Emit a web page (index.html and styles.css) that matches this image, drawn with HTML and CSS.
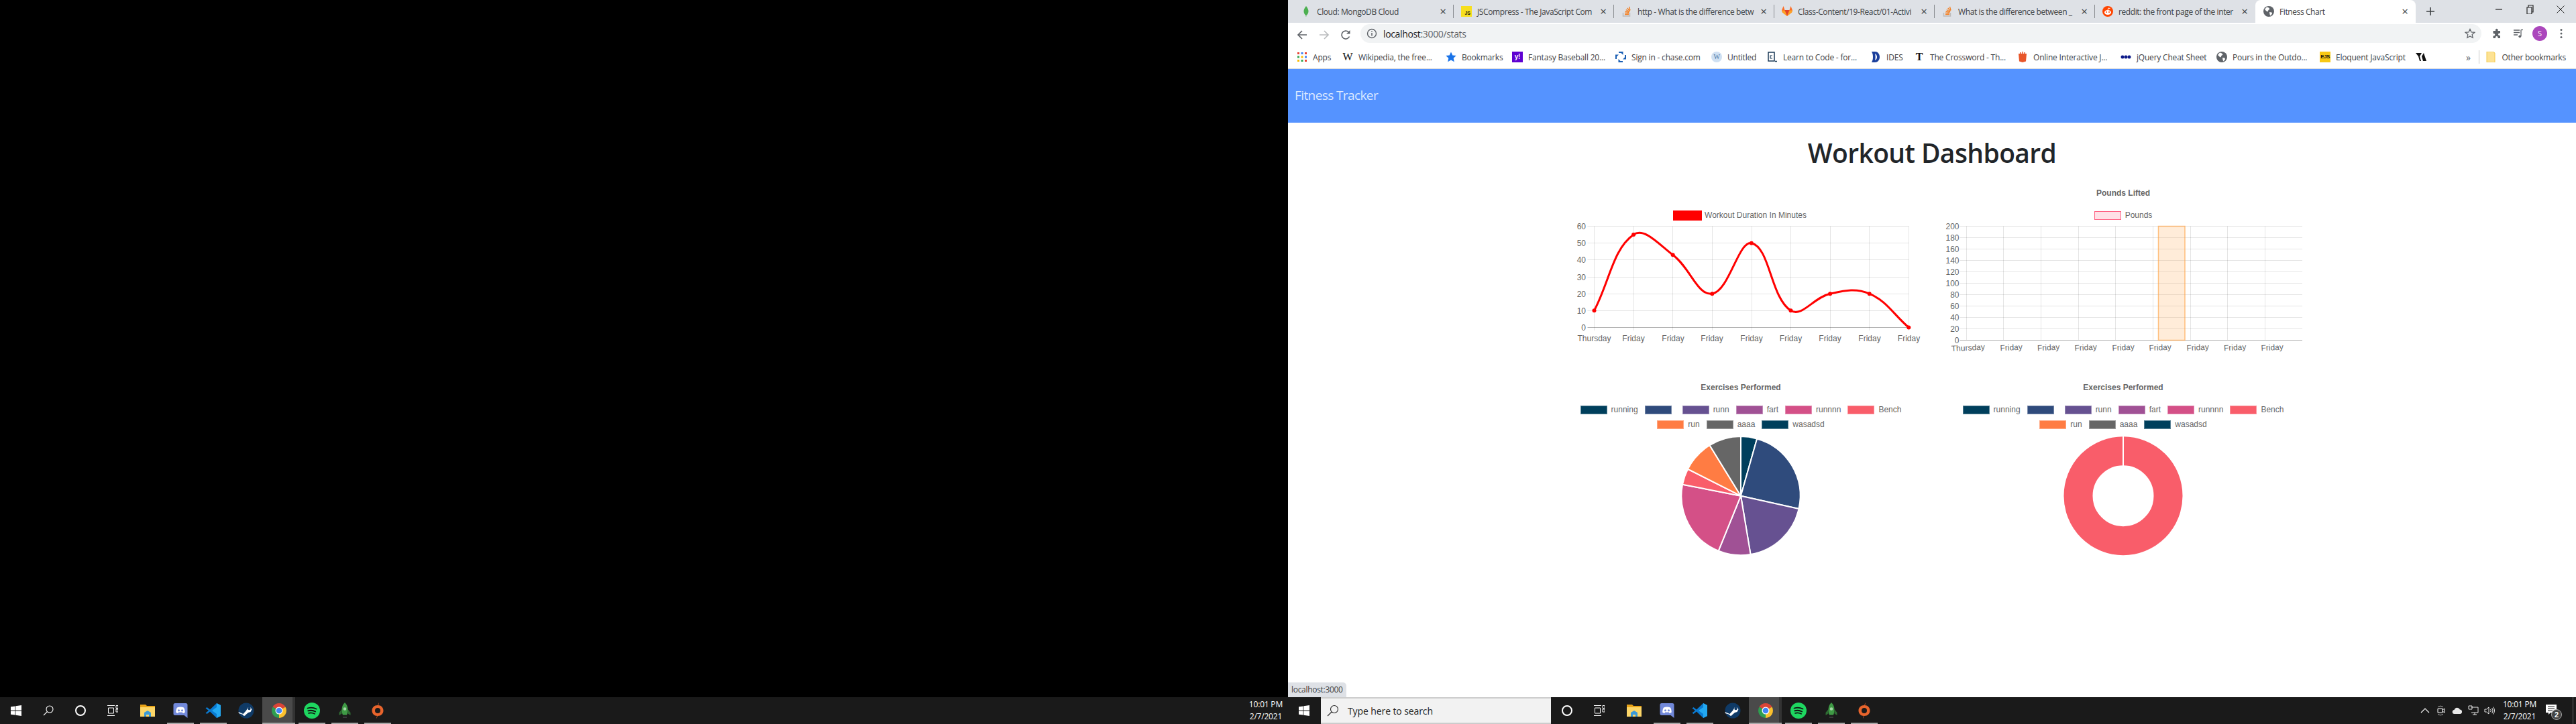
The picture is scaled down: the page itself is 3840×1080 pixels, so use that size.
FILE: index.html
```html
<!DOCTYPE html>
<html lang="en">
<head>
    <meta charset="UTF-8">
    <title>Fitness Chart</title>
    <link rel="stylesheet" href="styles.css">
</head>
<body>
<svg class="defs" width="0" height="0">
    <symbol id="globe" viewBox="0 0 16 16"><circle cx="8" cy="8" r="8" fill="#5f6368"/><path d="M5 1.5l3 1 1.5 2-2 1.5-1 2.5-2-1-2.5-2.5zM9 9l3.5.5.5 2-2.500 3-1-2z" fill="#fff"/></symbol>
    <symbol id="so" viewBox="0 0 16 16"><path d="M2.5 10v5h10v-5" fill="none" stroke="#bcbbbb" stroke-width="1.5"/><path d="M5 12.5h6M5 10.3l6 .6M5.600 8l5.800 1.5M6.800 5.500l5.200 3M8.800 3l3.600 4.600M11.500 1l1.500 5.500" fill="none" stroke="#f48024" stroke-width="1.4"/></symbol>
    <symbol id="win" viewBox="0 0 16 16"><path d="M0 2.300l6.500-.9v6.200H0zM7.300 1.300L16 0v7.600H7.300zM0 8.400h6.500v6.200L0 13.700zM7.300 8.400H16V16l-8.700-1.300z" fill="#fff"/></symbol>
    <symbol id="taskview" viewBox="0 0 16 16"><path d="M0 .5h11M0 15.500h11M1.500 4h8v8h-8zM13 .5h3v4h-3zM13 6h3v4h-3z" fill="none" stroke="#fff" stroke-width="1"/></symbol>
    <symbol id="explorer" viewBox="0 0 24 24"><path d="M1 3h8l2 2h12v3H1z" fill="#e8a317"/><path d="M1 7h22v14H1z" fill="#fcd668"/><path d="M7 21v-6l5-3 5 3v6z" fill="#3a9ad9"/><path d="M10 21v-3h4v3z" fill="#fcd668"/></symbol>
    <symbol id="discord" viewBox="0 0 24 24"><path d="M4 1h16a2.500 2.500 0 0 1 2.500 2.500V23l-5-4H4a2.500 2.500 0 0 1-2.500-2.500v-13A2.500 2.500 0 0 1 4 1z" fill="#7289da"/><path d="M7 7.500c3-1.500 7-1.500 10 0 1.200 2 1.800 4.500 1.800 7-1 .8-2 1.200-3 1.400l-1-1.400h-5.600l-1 1.400c-1-.2-2-.6-3-1.400 0-2.500.6-5 1.800-7z" fill="#fff"/><circle cx="9.5" cy="11.8" r="1.5" fill="#7289da"/><circle cx="14.5" cy="11.8" r="1.5" fill="#7289da"/></symbol>
    <symbol id="vscode" viewBox="0 0 24 24"><path d="M17 1l6 3v16l-6 3-10-9.500L2.500 17 .5 15.500 5 12 .5 8.500 2.500 7 7 10.500z" fill="#0a7ad1"/><path d="M17 1l6 3v16l-6 3V7l-7 5 7 5z" fill="#23a9f2"/></symbol>
    <symbol id="steam" viewBox="0 0 24 24"><circle cx="12" cy="12" r="11.5" fill="#0f3a66"/><path d="M.5 14l7 3 4.500-5 3-5h3l2.500 3-2 4-3.500 1-4 3.500c-1 2-3.500 1.500-4-.5L1 16z" fill="#fff"/><circle cx="16.5" cy="9" r="2.2" fill="#0f3a66"/></symbol>
    <symbol id="chrome" viewBox="0 0 24 24"><path d="M12 12L2.500 6.500a11 11 0 0 1 19 0z" fill="#db4437"/><path d="M12 12l9.500-5.500A11 11 0 0 1 12 23z" fill="#fbc02d"/><path d="M12 12v11A11 11 0 0 1 2.500 6.500z" fill="#2e9e50"/><circle cx="12" cy="12" r="5.5" fill="#fff"/><circle cx="12" cy="12" r="4.3" fill="#4285f4"/></symbol>
    <symbol id="spotify" viewBox="0 0 24 24"><circle cx="12" cy="12" r="12" fill="#1ed760"/><path d="M5.500 8.500c4.500-1.300 9-1 13 1M6.200 12.300c4-1 7.700-.7 11 1.200M7 15.800c3.200-.8 6.200-.5 9 1" fill="none" stroke="#111" stroke-width="1.8" stroke-linecap="round"/></symbol>
    <symbol id="rocket" viewBox="0 0 24 24"><path d="M7.500 10L3.500 15v4l4-2.500zM16.500 10l4 5v4l-4-2.500z" fill="#2e6b32"/><path d="M12 0c3 2.500 4.500 6.500 4.500 11 0 3-.7 5.500-1.500 7.500H9c-.8-2-1.500-4.500-1.500-7.500C7.500 6.500 9 2.500 12 0z" fill="#3f9a45"/><circle cx="12" cy="9.5" r="2.3" fill="#a5d6a7"/><path d="M9 22h6" stroke="#444" stroke-width="1.5"/></symbol>
    <symbol id="origin" viewBox="0 0 24 24"><path d="M14 0c0 1.500-.5 3-1.500 4 4.500 0 8 3.500 8 8s-3.500 8-8.500 8l-2 4c0-1.500.5-3 1.500-4-4.500 0-8-3.500-8-8s3.500-8 8.500-8z" fill="#e8642c"/><circle cx="12" cy="12" r="4" fill="#1a1a1a"/></symbol>
</svg>

<div class="screens">
    <!-- left monitor -->
    <section class="monitor">
        <div class="desktop"></div>
        <footer class="taskbar">
            <span class="tb-btn"><svg class="ic-win"><use href="#win"/></svg></span>
            <span class="tb-btn"><svg class="ic-16" viewBox="0 0 16 16"><circle cx="10" cy="6" r="5" fill="none" stroke="#fff" stroke-width="1.1"/><path d="M6.300 9.700L1 15" stroke="#fff" stroke-width="1.1"/></svg></span>
            <span class="tb-btn"><span class="cortana"></span></span>
            <span class="tb-btn"><svg class="ic-16"><use href="#taskview"/></svg></span>
            <span class="tb-app first"><svg class="ic-24"><use href="#explorer"/></svg></span>
            <span class="tb-app running"><svg class="ic-24"><use href="#discord"/></svg></span>
            <span class="tb-app running"><svg class="ic-24"><use href="#vscode"/></svg></span>
            <span class="tb-app"><svg class="ic-24"><use href="#steam"/></svg></span>
            <span class="tb-app running active"><svg class="ic-24"><use href="#chrome"/></svg></span>
            <span class="tb-app running"><svg class="ic-24"><use href="#spotify"/></svg></span>
            <span class="tb-app running"><svg class="ic-24"><use href="#rocket"/></svg></span>
            <span class="tb-app running"><svg class="ic-24"><use href="#origin"/></svg></span>
            <div class="clock left-clock"><span>10:01 PM</span><span>2/7/2021</span></div>
        </footer>
    </section>

    <!-- right monitor -->
    <section class="monitor">
        <div class="browser">
            <div class="tabstrip">
                <div class="tab sep">
                    <svg class="fav" viewBox="0 0 16 16"><path d="M8 0c2.500 3 3.500 5.500 3.500 8S10 13 8.300 14l-.1 2h-.5l-.1-2C6 13 4.500 10.500 4.500 8S5.500 3 8 0z" fill="#4caf50"/></svg>
                    <span class="tab-title">Cloud: MongoDB Cloud</span>
                    <span class="tab-x">&times;</span>
                </div>
                <div class="tab sep">
                    <span class="fav js">JS</span>
                    <span class="tab-title">JSCompress - The JavaScript Com</span>
                    <span class="tab-x">&times;</span>
                </div>
                <div class="tab sep">
                    <svg class="fav"><use href="#so"/></svg>
                    <span class="tab-title">http - What is the difference betw</span>
                    <span class="tab-x">&times;</span>
                </div>
                <div class="tab sep">
                    <svg class="fav" viewBox="0 0 16 16"><path d="M8 15L1 9.500 0 6.500 2.500 0l2 6h7l2-6L16 6.500l-1 3z" fill="#fc6d26"/><path d="M8 15L4.500 6h7z" fill="#e24329"/><path d="M8 15L1 9.500 0 6.500h4.500zM8 15l7-5.500 1-3h-4.500z" fill="#fca326"/></svg>
                    <span class="tab-title">Class-Content/19-React/01-Activi</span>
                    <span class="tab-x">&times;</span>
                </div>
                <div class="tab sep">
                    <svg class="fav"><use href="#so"/></svg>
                    <span class="tab-title">What is the difference between _</span>
                    <span class="tab-x">&times;</span>
                </div>
                <div class="tab">
                    <svg class="fav" viewBox="0 0 16 16"><circle cx="8" cy="8" r="8" fill="#ff4500"/><ellipse cx="8" cy="9.5" rx="5" ry="3.5" fill="#fff"/><circle cx="6" cy="9" r="1" fill="#ff4500"/><circle cx="10" cy="9" r="1" fill="#ff4500"/><path d="M8 6l1-3 2.500.6" fill="none" stroke="#fff"/></svg>
                    <span class="tab-title">reddit: the front page of the inter</span>
                    <span class="tab-x">&times;</span>
                </div>
                <div class="tab active">
                    <svg class="fav"><use href="#globe"/></svg>
                    <span class="tab-title">Fitness Chart</span>
                    <span class="tab-x">&times;</span>
                </div>
                <span class="newtab"><svg class="ic-14" viewBox="0 0 14 14"><path d="M7 1v12M1 7h12" stroke="#3c4043" stroke-width="1.6"/></svg></span>
                <div class="win-controls">
                    <span class="win-btn"><svg class="ic-14" viewBox="0 0 14 14"><path d="M2 7h10" stroke="#222" stroke-width="1.2"/></svg></span>
                    <span class="win-btn"><svg class="ic-14" viewBox="0 0 14 14"><path d="M3 4h7v10H3zM5 4V1h7v10h-2" fill="none" stroke="#222" stroke-width="1.2"/></svg></span>
                    <span class="win-btn"><svg class="ic-14" viewBox="0 0 14 14"><path d="M1.500 1.500l11 11M12.500 1.500l-11 11" stroke="#222"/></svg></span>
                </div>
            </div>

            <div class="toolbar">
                <span class="nav-btn back"><svg class="ic-16" viewBox="0 0 16 16"><path d="M15 8H2M8 2L2 8l6 6" fill="none" stroke="#5f6368" stroke-width="1.7"/></svg></span>
                <span class="nav-btn fwd"><svg class="ic-16" viewBox="0 0 16 16"><path d="M1 8h13M8 2l6 6-6 6" fill="none" stroke="#babcbe" stroke-width="1.7"/></svg></span>
                <span class="nav-btn reload"><svg class="ic-16" viewBox="0 0 16 16"><path d="M13.500 10.500A6 6 0 1 1 12.300 3.800" fill="none" stroke="#5f6368" stroke-width="1.7"/><path d="M14.500 1v5.500H9z" fill="#5f6368"/></svg></span>
                <div class="omnibox">
                    <svg class="ic-16" viewBox="0 0 16 16"><circle cx="8" cy="8" r="6.5" fill="none" stroke="#5f6368" stroke-width="1.4"/><path d="M8 7v4.500M8 4.200v1.600" stroke="#5f6368" stroke-width="1.5"/></svg>
                    <span class="url">localhost<span class="url-rest">:3000/stats</span></span>
                    <svg class="ic-16" viewBox="0 0 16 16"><path d="M8 1.500l2 4.400 4.800.5-3.600 3.200 1 4.700L8 11.900l-4.200 2.400 1-4.700L1.200 6.400 6 5.900z" fill="none" stroke="#5f6368" stroke-width="1.3"/></svg>
                </div>
                <span class="tool-btn"><svg class="ic-16" viewBox="0 0 16 16"><path d="M6 2.500a1.800 1.800 0 0 1 3.600 0V4H13v3.400h-1.200a1.800 1.800 0 0 0 0 3.600H13v4H9.600v-1.200a1.800 1.800 0 0 0-3.600 0V15H2.500v-3.500h1a1.800 1.800 0 0 0 0-3.600h-1V4H6z" fill="#5f6368"/></svg></span>
                <span class="tool-btn"><svg class="ic-16" viewBox="0 0 16 16"><path d="M1 3h9M1 6.500h9M1 10h6M12 2.500V12" fill="none" stroke="#5f6368" stroke-width="1.3"/><circle cx="10.3" cy="12.3" r="1.9" fill="#5f6368"/><path d="M12 2.500h3" stroke="#5f6368" stroke-width="1.3"/></svg></span>
                <span class="tool-btn"><span class="avatar">S</span></span>
                <span class="tool-btn"><svg class="ic-16" viewBox="0 0 16 16"><circle cx="8" cy="2.5" r="1.5" fill="#5f6368"/><circle cx="8" cy="8" r="1.5" fill="#5f6368"/><circle cx="8" cy="13.5" r="1.5" fill="#5f6368"/></svg></span>
            </div>

            <div class="bookmarks">
                <span class="bm w-68">
                    <svg class="fav" viewBox="0 0 16 16"><path d="M1 1h3v3H1z" fill="#ea4335"/><path d="M6.500 1h3v3h-3z" fill="#4285f4"/><path d="M12 1h3v3h-3z" fill="#ea4335"/><path d="M1 6.500h3v3H1z" fill="#34a853"/><path d="M6.500 6.500h3v3h-3z" fill="#fbbc05"/><path d="M12 6.500h3v3h-3z" fill="#4285f4"/><path d="M1 12h3v3H1z" fill="#fbbc05"/><path d="M6.500 12h3v3h-3z" fill="#34a853"/><path d="M12 12h3v3h-3z" fill="#ea4335"/></svg>
                    Apps
                </span>
                <span class="bm w-154"><span class="fav glyph-w">W</span>Wikipedia, the free...</span>
                <span class="bm w-99">
                    <svg class="fav" viewBox="0 0 16 16"><path d="M8 .5l2.300 5 5.400.6-4 3.700 1.100 5.400L8 12.500l-4.800 2.700 1.100-5.400-4-3.700 5.400-.6z" fill="#1a73e8"/></svg>
                    Bookmarks
                </span>
                <span class="bm w-154"><span class="fav yahoo">y!</span>Fantasy Baseball 20...</span>
                <span class="bm w-143">
                    <svg class="fav" viewBox="0 0 16 16"><path d="M5 0h6.500v5L8.500 2H5zM16 5v6.500h-5l3-3V5zM11 16H4.500v-5l3 3H11zM0 11V4.500h5l-3 3V11z" fill="#1a5fb4"/></svg>
                    Sign in - chase.com
                </span>
                <span class="bm w-83"><span class="fav untitled">W</span>Untitled</span>
                <span class="bm w-154">
                    <svg class="fav" viewBox="0 0 16 16"><path d="M2 1h9v13H2z" fill="#fff" stroke="#1b3a57" stroke-width="1.5"/><path d="M8 6H5v4h3" fill="none" stroke="#1b3a57" stroke-width="1.2"/><path d="M12 14.500h3" stroke="#1b3a57" stroke-width="1.5"/></svg>
                    Learn to Code - for...
                </span>
                <span class="bm w-65">
                    <svg class="fav" viewBox="0 0 16 16"><path d="M2 0h5c4 0 7 3.500 7 8s-3 8-7 8H2c1.500-2.500 2-5 2-8s-.5-5.500-2-8z" fill="#1b3f9c"/><path d="M7 3c2 1 3 3 3 5s-1 4-3 5c.5-2 .7-3.500.7-5S7.500 5 7 3z" fill="#fff"/></svg>
                    IDES
                </span>
                <span class="bm w-154"><span class="fav nyt">T</span>The Crossword - Th...</span>
                <span class="bm w-154">
                    <svg class="fav" viewBox="0 0 16 16"><path d="M2 3h12l-1 11.500L8 16l-5-1.500z" fill="#e8562a"/><path d="M5 3V1M8 3V0M11 3V1" stroke="#e8562a" stroke-width="1.5"/></svg>
                    Online Interactive J...
                </span>
                <span class="bm w-143">
                    <svg class="fav" viewBox="0 0 16 16"><circle cx="3" cy="8" r="2.5" fill="#0d1a8a"/><circle cx="8" cy="8" r="2.5" fill="#0d1a8a"/><circle cx="13" cy="8" r="2.5" fill="#0d1a8a"/></svg>
                    jQuery Cheat Sheet
                </span>
                <span class="bm w-154"><svg class="fav"><use href="#globe"/></svg>Pours in the Outdo...</span>
                <span class="bm w-143"><span class="fav ejs">EJS</span>Eloquent JavaScript</span>
                <span class="bm">
                    <svg class="fav" viewBox="0 0 16 16"><path d="M0 2h9l-3 5 2 7H6L4 7zM9 7l3-5 4 12h-5z" fill="#111"/></svg>
                </span>
                <div class="bm-end">
                    <span class="chevrons">&raquo;</span>
                    <span class="bm-sep"></span>
                    <span class="bm">
                        <svg class="fav" viewBox="0 0 16 16"><path d="M2 0h9l3 2v14H2z" fill="#fde293" stroke="#f2c94c"/></svg>
                        Other bookmarks
                    </span>
                </div>
            </div>

            <main class="page">
                <nav class="navbar"><span class="brand">Fitness Tracker</span></nav>
                <h1 class="page-title">Workout Dashboard</h1>

                <div class="charts">
                    <div class="chart">
                        <div class="chart-title"></div>
                        <div class="legend">
                            <span class="legend-item"><i class="swatch sw-red"></i>Workout Duration In Minutes</span>
                        </div>
                        <svg class="plot" viewBox="0 0 536 201">
                            <path class="grid" d="M39.5 8.5H518.5M39.5 33.5H518.5M39.5 58.5H518.5M39.5 84.5H518.5M39.5 109.5H518.5M39.5 134.5H518.5"/>
                            <path class="grid" d="M49.5 8.5V164M108.5 8.5V164M166.5 8.5V164M225.5 8.5V164M284.5 8.5V164M342.5 8.5V164M401.5 8.5V164M459.5 8.5V164M518.5 8.5V164"/>
                            <path class="zero" d="M39.5 159.5H518.5"/>
                            <g class="tick end">
                                <text x="37" y="12.5">60</text><text x="37" y="37.5">50</text><text x="37" y="62.5">40</text><text x="37" y="88.5">30</text><text x="37" y="113.5">20</text><text x="37" y="138.5">10</text><text x="37" y="163.5">0</text>
                            </g>
                            <g class="tick mid">
                                <text x="49.5" y="180">Thursday</text><text x="108" y="180">Friday</text><text x="167" y="180">Friday</text><text x="225" y="180">Friday</text><text x="284" y="180">Friday</text><text x="342.5" y="180">Friday</text><text x="401" y="180">Friday</text><text x="460" y="180">Friday</text><text x="518.5" y="180">Friday</text>
                            </g>
                            <g transform="translate(49.5 8.5)">
                                <path class="duration" d="M0 125.83C23.44 80.53 27.7 34.48 58.6 12.58C74.57 1.26 96.4 27.14 117.2 42.78C143.26 62.37 154.1 103.93 175.8 100.67C200.97 96.89 215.09 21.02 234.4 25.17C261.97 31.09 262.72 106.32 293 125.83C309.6 136.52 327.18 105.91 351.6 100.67C374.06 95.85 389.97 91.98 410.2 100.67C436.85 112.12 445.36 130.87 468.8 151"/>
                                <g class="dots">
                                    <circle cx="0" cy="125.83" r="3"/><circle cx="58.6" cy="12.58" r="3"/><circle cx="117.2" cy="42.78" r="3"/><circle cx="175.8" cy="100.67" r="3"/><circle cx="234.4" cy="25.17" r="3"/><circle cx="293" cy="125.83" r="3"/><circle cx="351.6" cy="100.67" r="3"/><circle cx="410.2" cy="100.67" r="3"/><circle cx="468.8" cy="151" r="3"/>
                                </g>
                            </g>
                        </svg>
                    </div>

                    <div class="chart">
                        <div class="chart-title">Pounds Lifted</div>
                        <div class="legend">
                            <span class="legend-item"><i class="swatch sw-pink"></i>Pounds</span>
                        </div>
                        <svg class="plot" viewBox="0 0 536 201">
                            <path class="grid" d="M24.5 8.5H535M24.5 25.5H535M24.5 42.5H535M24.5 59.5H535M24.5 76.5H535M24.5 93.5H535M24.5 110.5H535M24.5 127.5H535M24.5 144.5H535M24.5 161.5H535"/>
                            <path class="grid" d="M34.5 8.5V178M89.5 8.5V178M145.5 8.5V178M201.5 8.5V178M256.5 8.5V178M312.5 8.5V178M368.5 8.5V178M423.5 8.5V178M479.5 8.5V178"/>
                            <path class="zero" d="M24.5 178.5H535"/>
                            <rect class="pounds-bar" x="320.5" y="8.5" width="39.5" height="170"/>
                            <g class="tick end">
                                <text x="23.5" y="12.5">200</text><text x="23.5" y="29.5">180</text><text x="23.5" y="46.5">160</text><text x="23.5" y="63.5">140</text><text x="23.5" y="80.5">120</text><text x="23.5" y="97.5">100</text><text x="23.5" y="114.5">80</text><text x="23.5" y="131.5">60</text><text x="23.5" y="148.5">40</text><text x="23.5" y="165.5">20</text><text x="23.5" y="182.5">0</text>
                            </g>
                            <g class="tick end">
                                <text transform="translate(62 192.5) rotate(-3)">Thursday</text>
                                <text transform="translate(118 192.5) rotate(-3)">Friday</text>
                                <text transform="translate(173.5 192.5) rotate(-3)">Friday</text>
                                <text transform="translate(229 192.5) rotate(-3)">Friday</text>
                                <text transform="translate(285 192.5) rotate(-3)">Friday</text>
                                <text transform="translate(340 192.5) rotate(-3)">Friday</text>
                                <text transform="translate(396 192.5) rotate(-3)">Friday</text>
                                <text transform="translate(451.5 192.5) rotate(-3)">Friday</text>
                                <text transform="translate(507 192.5) rotate(-3)">Friday</text>
                            </g>
                        </svg>
                    </div>

                    <div class="chart">
                        <div class="chart-title">Exercises Performed</div>
                        <div class="legend">
                            <span class="legend-item"><i class="swatch c1"></i>running</span>
                            <span class="legend-item"><i class="swatch c2"></i></span>
                            <span class="legend-item"><i class="swatch c3"></i>runn</span>
                            <span class="legend-item"><i class="swatch c4"></i>fart</span>
                            <span class="legend-item"><i class="swatch c5"></i>runnnn</span>
                            <span class="legend-item"><i class="swatch c6"></i>Bench</span>
                            <span class="legend-item"><i class="swatch c7"></i>run</span>
                            <span class="legend-item"><i class="swatch c8"></i>aaaa</span>
                            <span class="legend-item"><i class="swatch c1"></i>wasadsd</span>
                        </div>
                        <svg class="round" viewBox="0 0 536 200">
                            <g class="slices">
                                <path class="f1" d="M268 98.7L268 10.1A88.6 88.6 0 0 1 292.11 13.44Z"/>
                                <path class="f2" d="M268 98.7L292.11 13.44A88.6 88.6 0 0 1 354.46 118.08Z"/>
                                <path class="f3" d="M268 98.7L354.46 118.08A88.6 88.6 0 0 1 282.57 186.1Z"/>
                                <path class="f4" d="M268 98.7L282.57 186.1A88.6 88.6 0 0 1 234.65 180.79Z"/>
                                <path class="f5" d="M268 98.7L234.65 180.79A88.6 88.6 0 0 1 181.04 81.72Z"/>
                                <path class="f6" d="M268 98.7L181.04 81.72A88.6 88.6 0 0 1 188.94 58.7Z"/>
                                <path class="f7" d="M268 98.7L188.94 58.7A88.6 88.6 0 0 1 221.61 23.21Z"/>
                                <path class="f8" d="M268 98.7L221.61 23.21A88.6 88.6 0 0 1 268 10.1Z"/>
                            </g>
                        </svg>
                    </div>

                    <div class="chart">
                        <div class="chart-title">Exercises Performed</div>
                        <div class="legend">
                            <span class="legend-item"><i class="swatch c1"></i>running</span>
                            <span class="legend-item"><i class="swatch c2"></i></span>
                            <span class="legend-item"><i class="swatch c3"></i>runn</span>
                            <span class="legend-item"><i class="swatch c4"></i>fart</span>
                            <span class="legend-item"><i class="swatch c5"></i>runnnn</span>
                            <span class="legend-item"><i class="swatch c6"></i>Bench</span>
                            <span class="legend-item"><i class="swatch c7"></i>run</span>
                            <span class="legend-item"><i class="swatch c8"></i>aaaa</span>
                            <span class="legend-item"><i class="swatch c1"></i>wasadsd</span>
                        </div>
                        <svg class="round" viewBox="0 0 536 200">
                            <circle class="donut" cx="268" cy="98.7" r="67"/>
                            <path class="donut-gap" d="M268 10V54"/>
                        </svg>
                    </div>
                </div>

                <div class="status-tip">localhost:3000</div>
            </main>
        </div>

        <footer class="taskbar">
            <span class="tb-btn"><svg class="ic-win"><use href="#win"/></svg></span>
            <div class="searchbox">
                <svg class="ic-18" viewBox="0 0 18 18"><circle cx="11" cy="7" r="5.5" fill="none" stroke="#222" stroke-width="1.1"/><path d="M7 11l-6 6" stroke="#222" stroke-width="1.1"/></svg>
                <span>Type here to search</span>
            </div>
            <span class="tb-btn"><span class="cortana"></span></span>
            <span class="tb-btn"><svg class="ic-16"><use href="#taskview"/></svg></span>
            <span class="tb-app first"><svg class="ic-24"><use href="#explorer"/></svg></span>
            <span class="tb-app running"><svg class="ic-24"><use href="#discord"/></svg></span>
            <span class="tb-app running"><svg class="ic-24"><use href="#vscode"/></svg></span>
            <span class="tb-app"><svg class="ic-24"><use href="#steam"/></svg></span>
            <span class="tb-app running active"><svg class="ic-24"><use href="#chrome"/></svg></span>
            <span class="tb-app running"><svg class="ic-24"><use href="#spotify"/></svg></span>
            <span class="tb-app running"><svg class="ic-24"><use href="#rocket"/></svg></span>
            <span class="tb-app running"><svg class="ic-24"><use href="#origin"/></svg></span>

            <div class="tray">
                <svg class="tray-ic" viewBox="0 0 16 16"><path d="M2 11l6-6 6 6" fill="none" stroke="#fff" stroke-width="1.1"/></svg>
                <svg class="tray-ic" viewBox="0 0 16 16"><path d="M3 5h7v6H3zM10 7l3-2v6l-3-2" fill="none" stroke="#fff"/><path d="M3 2.500A7 7 0 0 1 11 2.500M3 13.500a7 7 0 0 0 8 0" fill="none" stroke="#aaa"/></svg>
                <svg class="tray-ic" viewBox="0 0 16 16"><path d="M4 13a3 3 0 0 1-.5-6A4.500 4.500 0 0 1 12 6.500 3.300 3.300 0 0 1 12.500 13z" fill="#e8e8e8"/></svg>
                <svg class="tray-ic" viewBox="0 0 16 16"><path d="M5 3h10v8H5M10 11v3M7 14h6M1 1h5v5H1z" fill="none" stroke="#fff" stroke-width=".9"/></svg>
                <svg class="tray-ic" viewBox="0 0 16 16"><path d="M1 6h2.500L7 3v10L3.500 10H1zM9.500 6a3 3 0 0 1 0 4M11.500 4a6 6 0 0 1 0 8M13.500 2.500a8.500 8.500 0 0 1 0 11" fill="none" stroke="#fff" stroke-width=".9"/></svg>
                <div class="clock"><span>10:01 PM</span><span>2/7/2021</span></div>
                <svg class="notify" viewBox="0 0 26 26">
                    <path d="M1 2h16v12H8l-3 3v-3H1z" fill="#fff"/><path d="M4 5h10M4 8h10M4 11h7" stroke="#1a1a1a"/>
                    <circle cx="17" cy="17" r="7.5" fill="#444" stroke="#aaa"/>
                    <text class="notify-count" x="17" y="21">2</text>
                </svg>
                <span class="show-desktop"></span>
            </div>
        </footer>
    </section>
</div>
</body>
</html>
```

FILE: styles.css
```css
* {
    margin: 0;
    padding: 0;
    box-sizing: border-box;
}

body {
    background: #000;
    overflow: hidden;
    font-family: "Open Sans", "Noto Sans", sans-serif;
}

svg {
    display: block;
    flex: none;
}

.defs {
    position: absolute;
}

.ic-14 { width: 14px; height: 14px; }
.ic-16 { width: 16px; height: 16px; }
.ic-18 { width: 18px; height: 18px; }
.ic-24 { width: 24px; height: 24px; }
.ic-win { width: 16px; height: 16px; }

.screens {
    display: flex;
    width: 3840px;
    height: 1080px;
}

.monitor {
    width: 1920px;
    height: 1080px;
    display: flex;
    flex-direction: column;
}

.desktop {
    flex: 1;
    background: #000;
}

/* taskbar */
.taskbar {
    height: 40px;
    flex: none;
    background: #1a1a1a;
    display: flex;
    align-items: stretch;
    color: #fff;
}

.tb-btn {
    width: 48px;
    display: flex;
    align-items: center;
    justify-content: center;
}

.tb-app {
    width: 49px;
    display: flex;
    align-items: center;
    justify-content: center;
}

.tb-app.first {
    margin-left: 3px;
}

.tb-app.running {
    background: linear-gradient(#a8a8a8, #a8a8a8) center bottom / 40px 2px no-repeat;
}

.tb-app.active {
    background: linear-gradient(#a8a8a8, #a8a8a8) left bottom / 100% 2px no-repeat, linear-gradient(90deg, #4a4a4a 45px, #333 45px);
}

.cortana {
    width: 16px;
    height: 16px;
    border: 2.5px solid #fff;
    border-radius: 50%;
}

.clock {
    display: flex;
    flex-direction: column;
    align-items: center;
    justify-content: center;
    gap: 2px;
    font-size: 12px;
    line-height: 16px;
    letter-spacing: -0.2px;
    white-space: nowrap;
}

.left-clock {
    margin-left: auto;
    padding-right: 8px;
}

.searchbox {
    width: 343px;
    margin-left: 1px;
    display: flex;
    align-items: center;
    gap: 13px;
    padding-left: 9px;
    background: #f2f2f2;
    border-top: 2px solid #ccc;
    border-bottom: 2px solid #ccc;
    color: #222;
    font-size: 14px;
    letter-spacing: -0.1px;
}

.tray {
    margin-left: auto;
    display: flex;
    align-items: center;
}

.tray-ic {
    width: 24px;
    height: 16px;
}

.tray .clock {
    width: 50px;
    margin-left: 8px;
}

.notify {
    width: 26px;
    height: 26px;
    margin: 3px 0 0 13px;
}

.notify-count {
    font: bold 11px "Liberation Sans", sans-serif;
    fill: #fff;
    text-anchor: middle;
}

.show-desktop {
    width: 1px;
    height: 40px;
    margin: 0 4px 0 15px;
    background: #666;
}

/* browser */
.browser {
    flex: 1;
    display: flex;
    flex-direction: column;
    background: #fff;
    position: relative;
    color: #3c4043;
    font-size: 12px;
}

.fav {
    width: 16px;
    height: 16px;
    flex: none;
}

.tabstrip {
    height: 34px;
    flex: none;
    background: #dee1e6;
    display: flex;
    padding-left: 8px;
}

.tab {
    width: 239px;
    height: 34px;
    display: flex;
    align-items: center;
    gap: 8px;
    padding: 0 9px 0 11px;
    position: relative;
}

.tab.sep::after {
    content: "";
    position: absolute;
    right: 0;
    top: 7px;
    width: 1px;
    height: 20px;
    background: #8a8d91;
}

.tab.active {
    background: #fff;
    border-radius: 8px 8px 0 0;
    padding-left: 12px;
}

.tab-title {
    flex: 1;
    min-width: 0;
    white-space: nowrap;
    letter-spacing: -0.4px;
}

.tab-x {
    width: 14px;
    text-align: center;
    font-size: 17px;
    line-height: 14px;
    color: #3c4043;
}

.js {
    background: #f7df1e;
    color: #111;
    font: bold 7px/22px "Liberation Sans", sans-serif;
    height: 16px;
    overflow: hidden;
    text-align: right;
    padding-right: 2px;
}

.newtab {
    width: 28px;
    margin-left: 8px;
    display: flex;
    align-items: center;
    justify-content: center;
}

.win-controls {
    margin-left: auto;
    display: flex;
}

.win-btn {
    width: 46px;
    height: 28px;
    display: flex;
    align-items: center;
    justify-content: center;
}

.toolbar {
    height: 35px;
    flex: none;
    display: flex;
    align-items: center;
}

.nav-btn {
    display: flex;
    align-items: center;
    justify-content: center;
    height: 28px;
}

.back { width: 32px; margin-left: 5px; }
.fwd { width: 34px; }
.reload { width: 30px; margin-right: 7px; }

.omnibox {
    width: 1671px;
    height: 28px;
    margin-top: -3px;
    margin-right: 7px;
    display: flex;
    align-items: center;
    gap: 9px;
    padding: 0 9px;
    background: #f1f3f4;
    border-radius: 14px;
}

.url {
    flex: 1;
    font-size: 14px;
    color: #202124;
    letter-spacing: -0.35px;
}

.url-rest {
    color: #5f6368;
}

.tool-btn {
    width: 32px;
    margin-top: -3px;
    display: flex;
    align-items: center;
    justify-content: center;
}

.avatar {
    width: 22px;
    height: 22px;
    border-radius: 50%;
    background: #ab47bc;
    color: #fff;
    font-size: 11px;
    line-height: 22px;
    text-align: center;
}

.bookmarks {
    height: 34px;
    flex: none;
    display: flex;
    align-items: center;
    padding: 0 0 1px 13px;
    border-bottom: 1px solid #d8d8d8;
    letter-spacing: -0.2px;
}

.bm {
    display: flex;
    align-items: center;
    gap: 8px;
    white-space: nowrap;
    flex: none;
}

.w-65 { width: 65px; }
.w-68 { width: 68px; }
.w-83 { width: 83px; }
.w-99 { width: 99px; }
.w-143 { width: 143px; }
.w-154 { width: 154px; }

.glyph-w {
    font: 16px/16px "Liberation Serif", serif;
    color: #111;
    text-align: center;
}

.yahoo {
    background: #5f01d1;
    color: #fff;
    font: bold 10px/16px "Liberation Sans", sans-serif;
    text-align: center;
}

.untitled {
    background: #cfe0f2;
    border-radius: 50%;
    color: #4b75a5;
    font: 10px/16px "Liberation Serif", serif;
    text-align: center;
}

.nyt {
    font: bold 16px/16px "Liberation Serif", serif;
    color: #111;
    text-align: center;
}

.ejs {
    background: #f7c815;
    color: #111;
    font: bold 8px/16px "Liberation Sans", sans-serif;
    letter-spacing: -0.5px;
    text-align: center;
}

.bm-end {
    margin-left: auto;
    display: flex;
    align-items: center;
    padding-right: 15px;
}

.chevrons {
    width: 16px;
    font-size: 14px;
    text-align: center;
    color: #5f6368;
}

.bm-sep {
    width: 1px;
    height: 20px;
    margin: 0 9px 0 8px;
    background: #c8c8c8;
}

/* page */
.page {
    flex: 1;
    font-family: "Liberation Sans", Arial, sans-serif;
}

.navbar {
    height: 80px;
    background: #5593ff;
    display: flex;
    align-items: center;
    padding: 0 0 2px 10px;
}

.brand {
    font: 19px "Open Sans", "Noto Sans", sans-serif;
    color: #dce8ff;
    letter-spacing: -0.6px;
}

.page-title {
    margin-top: 21px;
    text-align: center;
    font: 600 39px/48px "Open Sans", "Noto Sans", sans-serif;
    letter-spacing: -0.6px;
    color: #212529;
}

.charts {
    display: grid;
    grid-template-columns: 536px 536px;
    grid-template-rows: 290px auto;
    column-gap: 34px;
    justify-content: center;
    margin-top: 28px;
}

.chart-title {
    height: 16px;
    font-size: 12px;
    font-weight: bold;
    line-height: 16px;
    text-align: center;
    color: #666;
}

.legend {
    margin-top: 17px;
    display: flex;
    flex-wrap: wrap;
    justify-content: center;
    gap: 6px 10px;
    font-size: 12px;
    line-height: 16px;
    color: #666;
}

.legend-item {
    display: flex;
    align-items: center;
    min-height: 16px;
}

.swatch {
    width: 40px;
    height: 13px;
    flex: none;
    margin-right: 6px;
    box-shadow: inset 0 0 0 1px rgba(255, 255, 255, 0.35);
}

.sw-red {
    width: 43px;
    height: 15px;
    margin: 0 4px 0 -3px;
    background: #f00;
    box-shadow: none;
}

.sw-pink {
    background: rgba(255, 99, 132, 0.2);
    box-shadow: inset 0 0 0 1px #ff6384;
}

.c1 { background: #003f5c; }
.c2 { background: #2f4b7c; }
.c3 { background: #665191; }
.c4 { background: #a05195; }
.c5 { background: #d45087; }
.c6 { background: #f95d6a; }
.c7 { background: #ff7c43; }
.c8 { background: #666; }

.plot, .round {
    width: 536px;
}

.plot { height: 201px; }
.round { height: 200px; }

.grid {
    fill: none;
    stroke: rgba(0, 0, 0, 0.1);
}

.zero {
    fill: none;
    stroke: rgba(0, 0, 0, 0.3);
}

.tick {
    font: 12px "Liberation Sans", Arial, sans-serif;
    fill: #666;
}

.tick.end { text-anchor: end; }
.tick.mid { text-anchor: middle; }

.duration {
    fill: none;
    stroke: #f00;
    stroke-width: 3;
}

.dots {
    fill: #f00;
}

.pounds-bar {
    fill: rgba(255, 159, 64, 0.2);
    stroke: rgba(255, 159, 64, 0.65);
    stroke-width: 1.5;
}

.slices path {
    stroke: #fff;
    stroke-width: 2;
}

.f1 { fill: #003f5c; }
.f2 { fill: #2f4b7c; }
.f3 { fill: #665191; }
.f4 { fill: #a05195; }
.f5 { fill: #d45087; }
.f6 { fill: #f95d6a; }
.f7 { fill: #ff7c43; }
.f8 { fill: #666; }

.donut {
    fill: none;
    stroke: #f95d6a;
    stroke-width: 43;
}

.donut-gap {
    stroke: #fff;
    stroke-width: 2;
}

.status-tip {
    position: absolute;
    left: 0;
    bottom: 0;
    height: 22px;
    padding: 0 5px;
    background: #dee1e6;
    border-top-right-radius: 5px;
    font: 12px/22px "Open Sans", "Noto Sans", sans-serif;
    letter-spacing: -0.3px;
    color: #3c4043;
}
```
